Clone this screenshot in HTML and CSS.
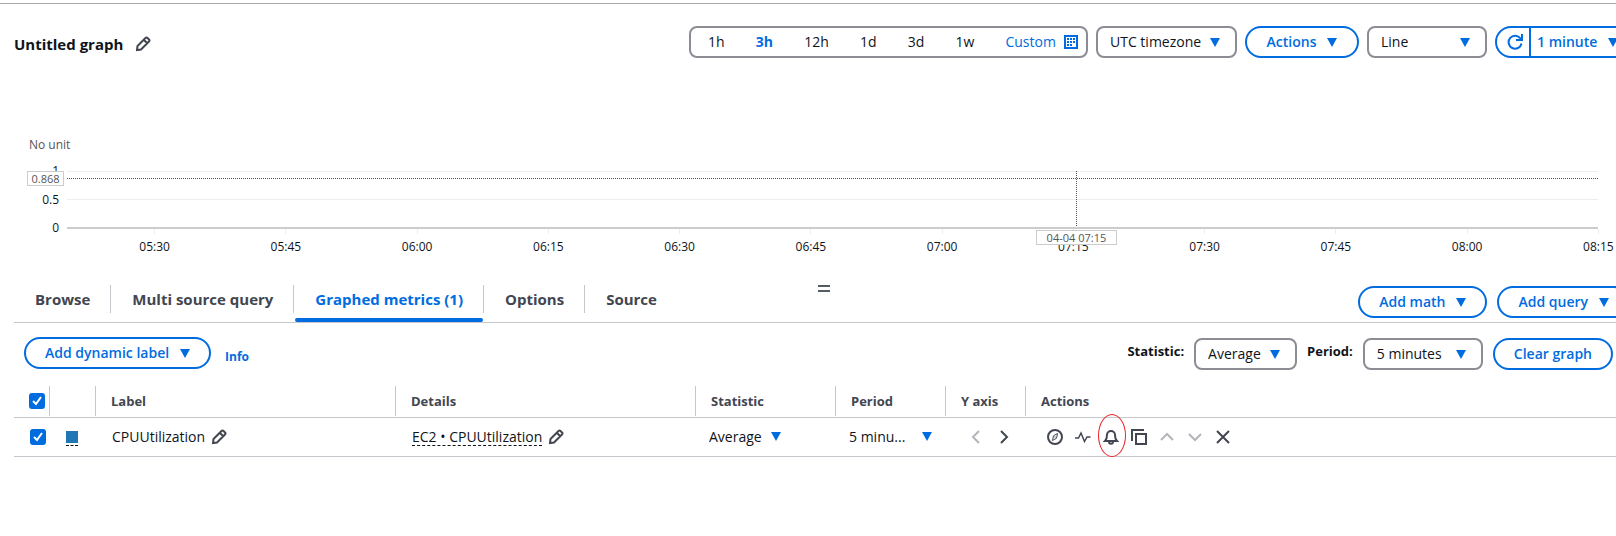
FILE: index.html
```html
<!DOCTYPE html>
<html lang="en">
<head>
<meta charset="utf-8">
<title>Untitled graph</title>
<link rel="stylesheet" href="styles.css">
</head>
<body>
<svg class="defs" aria-hidden="true">
  <symbol id="pencil" viewBox="0 0 16 16"><path d="M2 14l.5-4L10.500 2q1-1 2 0l1.500 1.500q1 1 0 2L6 13.500zM9 4l3 3"/></symbol>
  <symbol id="caret" viewBox="0 0 10 9"><path d="M0 0h10L5 9z"/></symbol>
</svg>
<main class="page">
  <header class="topbar">
    <h1 class="title">Untitled graph</h1>
    <button class="icon-btn" aria-label="Edit title"><svg class="icon"><use href="#pencil"/></svg></button>
    <div class="controls">
      <div class="range">
        <button>1h</button><button class="selected">3h</button><button>12h</button><button>1d</button><button>3d</button><button>1w</button>
        <button class="custom">Custom
          <svg class="calendar" viewBox="0 0 14 14"><path d="M1 1h12v12H1z" fill="none" stroke="currentColor" stroke-width="2"/><path d="M6 3h2v2H6zM9 3h2v2H9zM3 6h2v2H3zM6 6h2v2H6zM9 6h2v2H9zM3 9h2v2H3zM6 9h2v2H6zM3 3h2v2H3z" fill="currentColor"/></svg>
        </button>
      </div>
      <select class="select zone" aria-label="Timezone"><option>UTC timezone</option></select>
      <button class="pill actions">Actions <svg class="caret"><use href="#caret"/></svg></button>
      <select class="select type" aria-label="Graph type"><option>Line</option></select>
      <div class="split">
        <button class="refresh" aria-label="Refresh"><svg viewBox="0 0 16 16"><path d="M14.500 9.500A6.500 6.500 0 1 1 13.500 4.500L15 6M15 0v6H9"/></svg></button>
        <button class="interval">1 minute <svg class="caret"><use href="#caret"/></svg></button>
      </div>
    </div>
  </header>

  <section class="chart" aria-label="Graph">
    <div class="unit">No unit</div>
    <div class="plot-row">
      <div class="y-axis"><span>1</span><span>0.5</span><span>0</span></div>
      <div class="plot">
        <div class="cross-h"></div><div class="cross-v"></div>
        <div class="tip tip-y">0.868</div><div class="tip tip-x">04-04 07:15</div>
      </div>
    </div>
    <div class="x-axis"><span>05:30</span><span>05:45</span><span>06:00</span><span>06:15</span><span>06:30</span><span>06:45</span><span>07:00</span><span>07:15</span><span>07:30</span><span>07:45</span><span>08:00</span><span>08:15</span></div>
  </section>

  <div class="tabbar">
    <nav class="tabs">
      <button>Browse</button><button>Multi source query</button><button class="active">Graphed metrics (1)</button><button>Options</button><button>Source</button>
    </nav>
    <div class="grip"></div>
    <div class="tab-actions">
      <button class="pill">Add math <svg class="caret"><use href="#caret"/></svg></button>
      <button class="pill">Add query <svg class="caret"><use href="#caret"/></svg></button>
    </div>
  </div>

  <div class="toolbar">
    <button class="pill">Add dynamic label <svg class="caret"><use href="#caret"/></svg></button>
    <a class="info" href="#">Info</a>
    <div class="filters">
      <label for="stat">Statistic:</label>
      <select class="select stat" id="stat"><option>Average</option></select>
      <label for="period">Period:</label>
      <select class="select period" id="period"><option>5 minutes</option></select>
      <button class="pill">Clear graph</button>
    </div>
  </div>

  <table class="metrics">
    <colgroup><col class="c-check"><col class="c-color"><col class="c-wide"><col class="c-wide"><col class="c-stat"><col class="c-period"><col class="c-axis"><col></colgroup>
    <thead>
      <tr>
        <th><input class="check" type="checkbox" checked aria-label="Select all"></th>
        <th><div></div></th><th><div>Label</div></th><th><div>Details</div></th><th><div>Statistic</div></th><th><div>Period</div></th><th><div>Y axis</div></th><th><div>Actions</div></th>
      </tr>
    </thead>
    <tbody>
      <tr>
        <td><input class="check row-check" type="checkbox" checked aria-label="Select CPUUtilization"></td>
        <td><button class="swatch" aria-label="Color"></button></td>
        <td><div class="cell">CPUUtilization <button class="icon-btn" aria-label="Edit label"><svg class="icon"><use href="#pencil"/></svg></button></div></td>
        <td><div class="cell"><span class="dashed">EC2 • CPUUtilization</span> <button class="icon-btn" aria-label="Edit details"><svg class="icon"><use href="#pencil"/></svg></button></div></td>
        <td><select class="plain plain-stat" aria-label="Statistic"><option>Average</option></select></td>
        <td><button class="plain-period">5 minu... <svg class="caret"><use href="#caret"/></svg></button></td>
        <td><div class="cell axis">
          <button class="icon-btn off" disabled aria-label="Left axis"><svg class="icon" viewBox="0 0 16 16"><path d="M11 2L5 8l6 6"/></svg></button>
          <button class="icon-btn" aria-label="Right axis"><svg class="icon" viewBox="0 0 16 16"><path d="M5 2l6 6-6 6"/></svg></button>
        </div></td>
        <td><div class="cell row-actions">
          <button class="icon-btn" aria-label="Explore"><svg class="icon" viewBox="0 0 16 16"><circle cx="8" cy="8" r="7"/><path class="fine" d="M10.500 4.500L9.500 9.200 5.500 11.500 6.500 6.800zM7.500 8h1"/></svg></button>
          <button class="icon-btn" aria-label="Anomaly detection"><svg class="icon" viewBox="0 0 16 16"><path class="wave" d="M0 9h3.500l2.500-5 3.500 8.500L12 8h3.500"/></svg></button>
          <button class="icon-btn marked" aria-label="Create alarm"><svg class="icon" viewBox="0 0 16 16"><path d="M2 12c1.500-1.500 2-2.500 2-6a4 4 0 0 1 8 0c0 3.500.5 4.500 2 6zM6 12.500c0 3 4 3 4 0"/></svg></button>
          <button class="icon-btn" aria-label="Duplicate"><svg class="icon" viewBox="0 0 16 16"><path d="M5 5h10v10H5zM1 12V1h12"/></svg></button>
          <button class="icon-btn off" disabled aria-label="Move up"><svg class="icon" viewBox="0 0 16 16"><path d="M2 11l6-6 6 6"/></svg></button>
          <button class="icon-btn off" disabled aria-label="Move down"><svg class="icon" viewBox="0 0 16 16"><path d="M2 5l6 6 6-6"/></svg></button>
          <button class="icon-btn" aria-label="Remove"><svg class="icon" viewBox="0 0 16 16"><path d="M2 2l12 12M14 2L2 14"/></svg></button>
        </div></td>
      </tr>
    </tbody>
  </table>
</main>
</body>
</html>
```
FILE: styles.css
```css
* { box-sizing: border-box; }
body { margin: 0; background: #fff; color: #0f141a; font: 14px/20px "Open Sans", "Noto Sans", sans-serif; }
button, select, input { font: inherit; color: inherit; margin: 0; }
button { padding: 0; border: 0; background: none; white-space: nowrap; }
.defs { display: none; }
.page { margin-top: 3px; padding-bottom: 16px; border-top: 1px solid #aaaaad; overflow: hidden; }
.icon { display: block; width: 16px; height: 16px; fill: none; stroke: #424650; stroke-width: 2; }
.icon .fine { stroke-width: 1; }
.icon .wave { stroke-width: 1.5; }
.icon-btn { flex: none; }
.off .icon { stroke: #b4b4bb; }
.caret { width: 10px; height: 9px; fill: #006ce0; flex: none; }

.topbar { display: flex; align-items: center; height: 80px; padding-left: 14px; }
.title { margin: 0 12px 0 0; font-size: 15px; font-weight: 700; white-space: nowrap; }
.controls { display: flex; gap: 8px; margin: 0 -16px 4px auto; }
.controls > * { flex: none; }
.range { display: flex; width: 399px; height: 32px; padding: 0 8px 0 17px; border: 2px solid #8c8c94; border-radius: 8px; justify-content: space-between; }
.range .selected { color: #006ce0; font-weight: 700; }
.range .custom { display: flex; align-items: center; gap: 8px; color: #006ce0; }
.calendar { width: 14px; height: 14px; }
.select { height: 32px; padding: 0 10px 0 12px; border: 2px solid #8c8c94; border-radius: 8px; appearance: none; background: url("data:image/svg+xml,%3Csvg xmlns='http://www.w3.org/2000/svg' width='10' height='9'%3E%3Cpath d='M0 0h10L5 9z' fill='%23006ce0'/%3E%3C/svg%3E") no-repeat right 15px center; }
.zone { width: 141px; }
.type, .period { width: 120px; }
.stat { width: 103px; }
.pill { display: flex; align-items: center; justify-content: center; gap: 11px; height: 32px; padding: 0 19px; border: 2px solid #006ce0; border-radius: 16px; color: #006ce0; font-weight: 600; }
.actions { width: 114px; }
.split { display: flex; width: 137px; height: 32px; border: 2px solid #006ce0; border-radius: 16px; color: #006ce0; font-weight: 600; }
.refresh { width: 34px; padding-left: 10px; border-right: 2px solid #006ce0; }
.refresh svg { display: block; width: 16px; height: 16px; fill: none; stroke: #006ce0; stroke-width: 2; }
.interval { display: flex; align-items: center; gap: 11px; padding-left: 6px; }

.chart { padding-top: 51px; font-size: 12px; line-height: 20px; }
.unit { padding-left: 29px; color: #555; }
.plot-row { display: flex; height: 58px; margin: 16px 18px 0 0; }
.y-axis { display: flex; flex-direction: column; justify-content: space-between; width: 67px; padding-right: 8px; margin: -10px 0 -9px; text-align: right; font-weight: 500; }
.plot { position: relative; flex: 1; border-bottom: 2px solid #ccc; background: linear-gradient(#eee, #eee) 0 0 / 100% 1px no-repeat, linear-gradient(#eee, #eee) 0 28px / 100% 1px no-repeat; }
.cross-h { position: absolute; left: 0; right: 0; top: 7px; height: 1px; background: repeating-linear-gradient(90deg, #555 0 1px, transparent 1px 2px); }
.cross-v { position: absolute; left: 65.9%; top: 0; bottom: 0; width: 1px; background: repeating-linear-gradient(#555 0 1px, transparent 1px 2px); }
.tip { position: absolute; border: 1px solid #ccc; background: #fff; color: #555; font-size: 11px; line-height: 13px; text-align: center; white-space: nowrap; }
.tip-y { right: 100%; top: 0; width: 37px; margin-right: 3px; }
.tip-x { left: 65.9%; top: 59px; width: 81px; margin-left: -40px; z-index: 1; }
.x-axis { display: grid; grid-template-columns: repeat(12, 1fr); margin: 0 -48px 0 89px; text-align: center; font-weight: 500; }
.x-axis span::before { content: ""; display: block; width: 1px; height: 5px; margin: 0 auto 3px; background: #eee; }

.tabbar { display: flex; align-items: flex-start; height: 43px; margin: 23px 0 0 14px; border-bottom: 1px solid #c6c6cd; }
.tabs { display: flex; flex: none; width: 666px; height: 43px; padding-top: 5px; font-size: 15px; font-weight: 700; color: #424650; }
.tabs button { position: relative; height: 28px; padding: 0 20px 0 21px; border-right: 1px solid #c6c6cd; }
.tabs button:last-child { border: 0; }
.tabs .active { color: #006ce0; }
.tabs .active::after { content: ""; position: absolute; left: 1px; right: 0; top: 33px; height: 4px; border-radius: 2px; background: #006ce0; }
.grip { width: 12px; height: 7px; margin: 5px 0 0 138px; border: solid #545b64; border-width: 2px 0; }
.tab-actions { display: flex; gap: 10px; margin: 6px -14px 0 auto; }
.toolbar { display: flex; align-items: flex-start; height: 63px; padding: 14px 3px 0 24px; }
.info { margin: 10px 0 0 14px; color: #006ce0; font-size: 12px; font-weight: 700; text-decoration: none; }
.filters { display: flex; gap: 10px; margin: 1px 0 0 auto; }
.filters label { padding-top: 3px; font-size: 13px; font-weight: 700; }

.metrics { width: calc(100% - 14px); margin-left: 14px; border-collapse: collapse; table-layout: fixed; }
.c-check { width: 35px; } .c-color { width: 46px; } .c-wide { width: 300px; } .c-stat { width: 140px; } .c-period { width: 110px; } .c-axis { width: 80px; }
.metrics th, .metrics td { padding: 0; text-align: left; vertical-align: middle; border-bottom: 1px solid #c6c6cd; white-space: nowrap; }
.metrics th { height: 31px; font-size: 13px; font-weight: 700; color: #424650; }
.metrics th div { height: 30px; padding-left: 15px; border-left: 1px solid #c6c6cd; line-height: 30px; }
.metrics td { height: 39px; }
.check { display: block; width: 16px; height: 16px; margin-left: 15px; appearance: none; border-radius: 3px; background: #006ce0 url("data:image/svg+xml,%3Csvg xmlns='http://www.w3.org/2000/svg' viewBox='0 0 16 16'%3E%3Cpath d='M4 8l3 3 5-7' fill='none' stroke='white' stroke-width='2'/%3E%3C/svg%3E"); }
.row-check { margin-left: 16px; }
.swatch { display: block; width: 12px; height: 15px; margin: 4px 0 0 17px; border-bottom: 1px dashed #0f141a; background: linear-gradient(#1f77b4, #1f77b4) 0 0 / 12px 12px no-repeat; }
.cell { display: flex; align-items: center; gap: 6px; padding-left: 17px; }
.dashed { border-bottom: 1px dashed #0f141a; line-height: 17px; }
.plain { appearance: none; padding: 0; border: 0; background: url("data:image/svg+xml,%3Csvg xmlns='http://www.w3.org/2000/svg' width='10' height='9'%3E%3Cpath d='M0 0h10L5 9z' fill='%23006ce0'/%3E%3C/svg%3E") no-repeat right center; }
.plain-stat { width: 72px; margin-left: 14px; }
.plain-period { display: flex; align-items: center; justify-content: space-between; width: 83px; margin-left: 14px; }
.axis { padding-left: 23px; gap: 12px; }
.row-actions { padding-left: 22px; gap: 12px; }
.marked { position: relative; }
.marked::after { content: ""; position: absolute; left: -5px; top: -15px; width: 26px; height: 41px; border: 1px solid #e8262d; border-radius: 50%; }
```
